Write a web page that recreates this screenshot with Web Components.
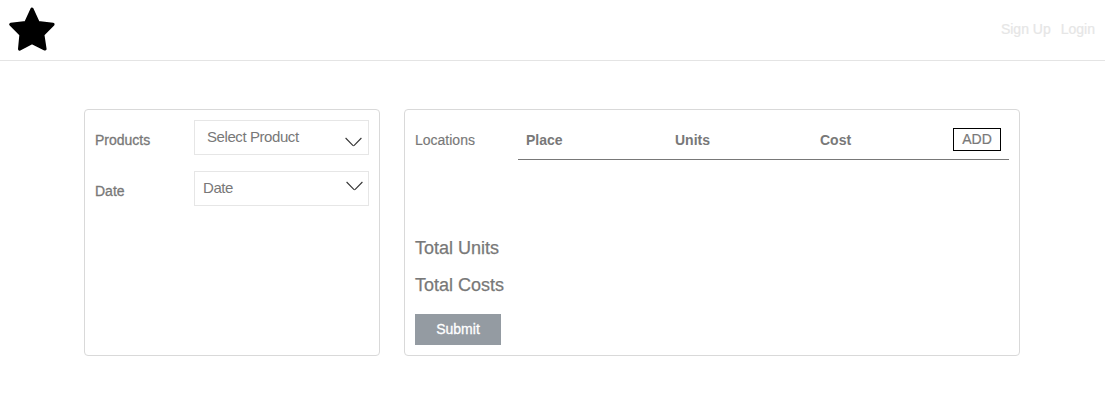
<!DOCTYPE html>
<html lang="en">
<head>
<meta charset="utf-8">
<title>Order form</title>
<style>
body { margin: 0; background: #fff; font: 14px/20px "Liberation Sans", Arial, sans-serif; color: #787878; }
</style>
</head>
<body>
<order-app></order-app>
<script>
const define = (name, html) => {
  const t = document.createElement('template');
  t.innerHTML = html;
  customElements.define(name, class extends HTMLElement {
    constructor() {
      super();
      this.attachShadow({ mode: 'open' }).append(t.content.cloneNode(true));
    }
  });
};

define('star-logo', `
<style>:host{display:block;width:48px;height:46px}svg{display:block}</style>
<svg width="48" height="46" viewBox="0 0 48 46"><path d="M24 3.2 L30.2 16.7 L45 18.3 L34.8 28.5 L37 43 L24 36.6 L11.6 43 L13 28.5 L2.8 18.3 L17.8 16.7 Z" fill="#000" stroke="#000" stroke-width="3.2" stroke-linejoin="round"/></svg>`);

define('app-header', `
<style>
:host{display:flex;justify-content:space-between;box-sizing:border-box;height:61px;padding:6px 10px 0 8px;border-bottom:1px solid #e4e4e4}
nav{display:flex;gap:10px;padding-top:13px;color:#e6e6e6;-webkit-text-stroke:.2px}
</style>
<star-logo></star-logo><nav><slot></slot></nav>`);

define('panel-card', `
<style>:host{display:block;box-sizing:border-box;height:247px;padding:10px;border:1px solid #d9d9d9;border-radius:4px}</style>
<slot></slot>`);

define('field-row', `
<style>
:host{display:grid;grid-template-columns:99px 175px;height:35px;margin-bottom:16px}
.label{padding-top:10px;-webkit-text-stroke:.3px}
</style>
<div class="label"><slot name="label"></slot></div><slot></slot>`);

define('select-box', `
<style>
:host{display:flex;justify-content:space-between;box-sizing:border-box;height:35px;border:1px solid #e6e6e6;padding:6px 5px 0 var(--inset,8px);font-size:15px;letter-spacing:-.42px}
svg{display:block;margin:var(--drop,3px) var(--shift,0) 0 0}
</style>
<span><slot></slot></span>
<svg width="17" height="10" viewBox="0 0 17 10"><path d="M.6 1 L7.8 8.4 Q8.5 9 9.2 8.4 L16.4 1" fill="none" stroke="#333" stroke-width="1.1"/></svg>`);

define('locations-table', `
<style>
:host{display:grid;grid-template-columns:103px 491px;height:39px}
.label{padding-top:10px;-webkit-text-stroke:.15px}
.head{display:grid;grid-template-columns:149px 145px 133px 48px;box-sizing:border-box;height:40px;padding:8px 8px 0;border-bottom:1px solid #787878;font-weight:bold}
.head span{padding-top:2px}
button{box-sizing:border-box;width:48px;height:23px;padding:0;border:1px solid #000;border-radius:0;background:#fff;color:#787878;font:14px/21px "Liberation Sans",Arial,sans-serif;-webkit-text-stroke:.2px}
</style>
<div class="label">Locations</div>
<div class="head"><span>Place</span><span>Units</span><span>Cost</span><button>ADD</button></div>`);

define('total-line', `
<style>:host{display:block;font-size:18px;line-height:24px;margin-bottom:13px;-webkit-text-stroke:.25px}</style><slot></slot>`);

define('submit-button', `
<style>
:host{display:block;padding-top:4px}
button{display:block;width:86px;height:31px;padding:0;border:0;border-radius:0;background:#949ba2;color:#fff;font:14px/31px "Liberation Sans",Arial,sans-serif;-webkit-text-stroke:.3px}
</style><button><slot></slot></button>`);

define('order-app', `
<style>
:host{display:block}
main{display:grid;grid-template-columns:296px 616px;gap:24px;padding:48px 0 0 84px}
.totals{padding-top:77px}
.first{--inset:12px;--drop:10px;--shift:1px}
</style>
<app-header><span>Sign Up</span><span>Login</span></app-header>
<main>
  <panel-card>
    <field-row><span slot="label">Products</span><select-box class="first">Select Product</select-box></field-row>
    <field-row><span slot="label">Date</span><select-box>Date</select-box></field-row>
  </panel-card>
  <panel-card>
    <locations-table></locations-table>
    <div class="totals"><total-line>Total Units</total-line><total-line>Total Costs</total-line></div>
    <submit-button>Submit</submit-button>
  </panel-card>
</main>`);
</script>
</body>
</html>
